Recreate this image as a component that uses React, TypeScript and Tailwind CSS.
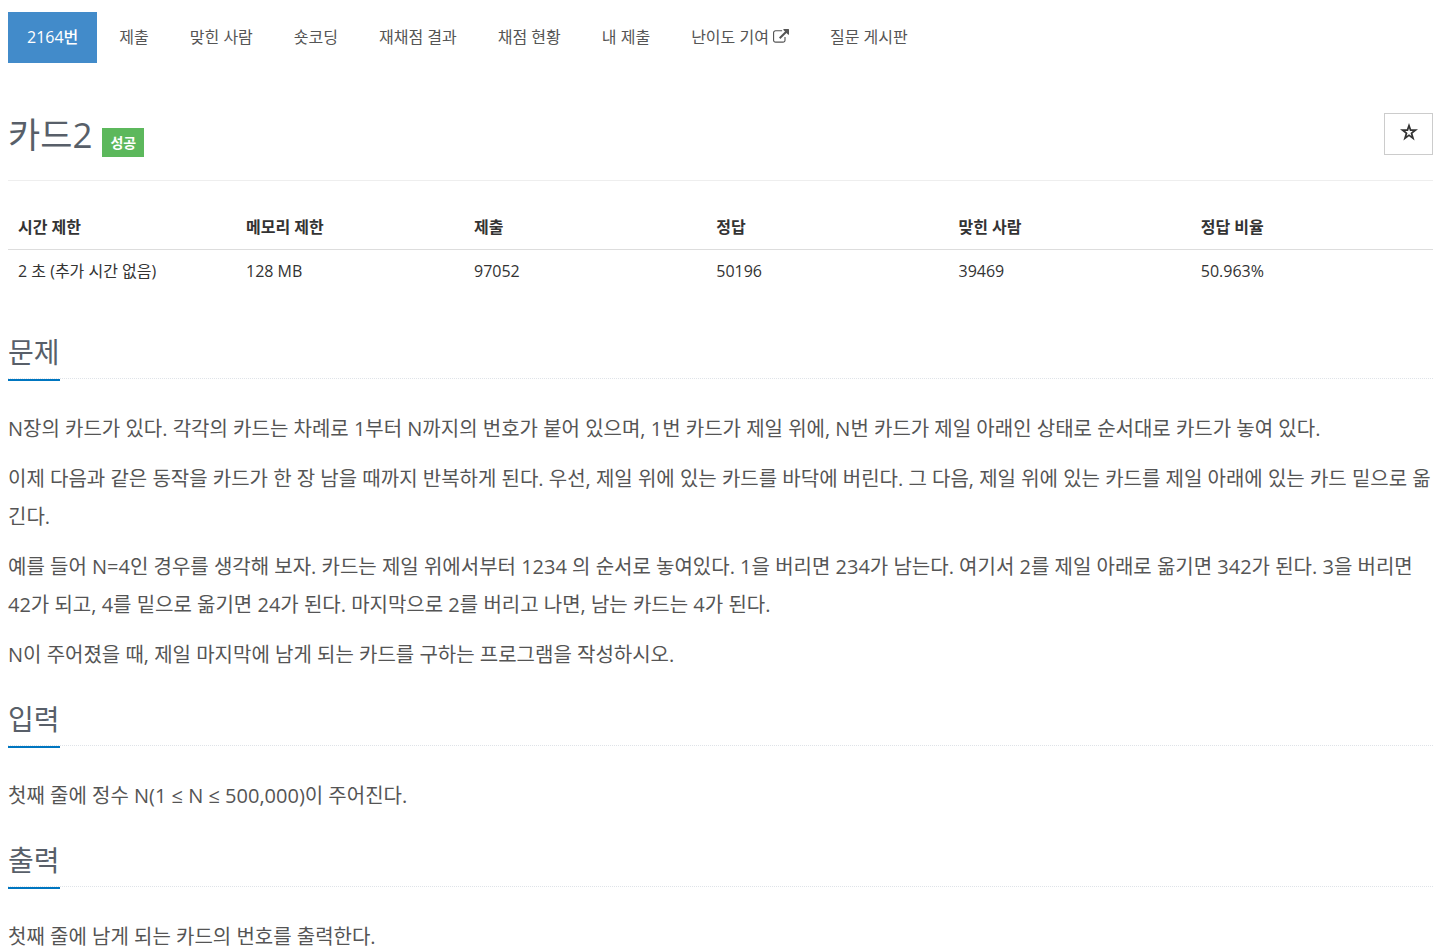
import React from "react";

const tabs = ["제출", "맞힌 사람", "숏코딩", "재채점 결과", "채점 현황", "내 제출", "난이도 기여", "질문 게시판"];

const stats = [
  { label: "시간 제한", value: "2 초 (추가 시간 없음)", width: "w-[16%]" },
  { label: "메모리 제한", value: "128 MB", width: "w-[16%]" },
  { label: "제출", value: "97052", width: "w-[17%]" },
  { label: "정답", value: "50196", width: "w-[17%]" },
  { label: "맞힌 사람", value: "39469", width: "w-[17%]" },
  { label: "정답 비율", value: "50.963%", width: "w-[17%]" },
];

function ExternalIcon() {
  return (
    <svg className="ml-1 inline-block h-4 w-4 align-[-2px]" viewBox="0 0 1792 1792" fill="currentColor" aria-hidden="true">
      <path d="M1408 928v320q0 119-84.500 203.500t-203.500 84.500h-832q-119 0-203.500-84.500t-84.500-203.500v-832q0-119 84.500-203.500t203.500-84.500h704q14 0 23 9t9 23v64q0 14-9 23t-23 9h-704q-66 0-113 47t-47 113v832q0 66 47 113t113 47h832q66 0 113-47t47-113v-320q0-14 9-23t23-9h64q14 0 23 9t9 23zm384-864v512q0 26-19 45t-45 19-45-19l-176-176-652 652q-10 10-23 10t-23-10l-114-114q-10-10-10-23t10-23l652-652-176-176q-19-19-19-45t19-45 45-19h512q26 0 45 19t19 45z" />
    </svg>
  );
}

function StarIcon() {
  return (
    <svg className="h-[18px] w-[18px]" viewBox="0 0 18 18" fill="#333" fillRule="evenodd" aria-hidden="true">
      <path d="M9 0L11.200 6.300H18L12.500 10.500L14.600 17.400L9 13.300L3.400 17.400L5.500 10.500L0 6.300H6.800ZM9 5.200L8.100 8.100H5.200L7.500 9.900L6.600 12.900L9 11.200L11.400 12.900L10.500 9.900L12.800 8.100H9.900Z" />
    </svg>
  );
}

function Section({ title, children }: { title: string; children: React.ReactNode }) {
  return (
    <section className="mb-[27px]">
      <div className="mb-[31px] flex border-b border-dotted border-[#dfe3e8]">
        <h2 className="-mb-[3px] border-b-2 border-[#0076c0] pb-[9px] text-[28px] leading-9 text-[#585f69]">{title}</h2>
      </div>
      <div className="space-y-3 text-[20px] leading-[38px] text-[#555]">{children}</div>
    </section>
  );
}

export default function App() {
  return (
    <main className="pl-2 pr-[7px] pt-3 font-['Open_Sans','Noto_Sans_CJK_KR',sans-serif] text-[16px] text-[#333]">
      <nav className="flex gap-[3px] leading-[23px] text-[#555]">
        <a href="#problem" className="bg-[#428bca] px-[19px] py-[14px] font-medium text-white">2164번</a>
        {tabs.map((tab) => (
          <a key={tab} href="#tab" className="px-[19px] py-[14px]">
            {tab}
            {tab === "난이도 기여" && <ExternalIcon />}
          </a>
        ))}
      </nav>
      <header className="mt-[50px] flex items-start justify-between border-b border-[#eee] pb-[23px]">
        <h1 className="flex items-end gap-[10px] text-[35px] leading-[44px] text-[#585f69]">
          카드2
          <span className="bg-[#5cb85c] px-2 text-[14px] font-semibold leading-[29px] text-white">성공</span>
        </h1>
        <button aria-label="즐겨찾기" className="flex h-[42px] w-[49px] items-center justify-center border border-[#ccc] bg-white pb-1">
          <StarIcon />
        </button>
      </header>
      <table className="mt-6 w-full table-fixed text-left leading-[23px]">
        <thead>
          <tr className="border-b border-[#ddd]">
            {stats.map((s) => <th key={s.label} className={`${s.width} px-[10px] pb-[10px] pt-[11px] font-bold`}>{s.label}</th>)}
          </tr>
        </thead>
        <tbody>
          <tr>{stats.map((s) => <td key={s.label} className="px-[10px] py-[10px]">{s.value}</td>)}</tr>
        </tbody>
      </table>
      <div className="mt-[41px]">
        <Section title="문제">
          <p>N장의 카드가 있다. 각각의 카드는 차례로 1부터 N까지의 번호가 붙어 있으며, 1번 카드가 제일 위에, N번 카드가 제일 아래인 상태로 순서대로 카드가 놓여 있다.</p>
          <p>이제 다음과 같은 동작을 카드가 한 장 남을 때까지 반복하게 된다. 우선, 제일 위에 있는 카드를 바닥에 버린다. 그 다음, 제일 위에 있는 카드를 제일 아래에 있는 카드 밑으로 옮긴다.</p>
          <p>예를 들어 N=4인 경우를 생각해 보자. 카드는 제일 위에서부터 1234 의 순서로 놓여있다. 1을 버리면 234가 남는다. 여기서 2를 제일 아래로 옮기면 342가 된다. 3을 버리면 42가 되고, 4를 밑으로 옮기면 24가 된다. 마지막으로 2를 버리고 나면, 남는 카드는 4가 된다.</p>
          <p>N이 주어졌을 때, 제일 마지막에 남게 되는 카드를 구하는 프로그램을 작성하시오.</p>
        </Section>
        <Section title="입력"><p>첫째 줄에 정수 N(1 ≤ N ≤ 500,000)이 주어진다.</p></Section>
        <Section title="출력"><p>첫째 줄에 남게 되는 카드의 번호를 출력한다.</p></Section>
      </div>
    </main>
  );
}
